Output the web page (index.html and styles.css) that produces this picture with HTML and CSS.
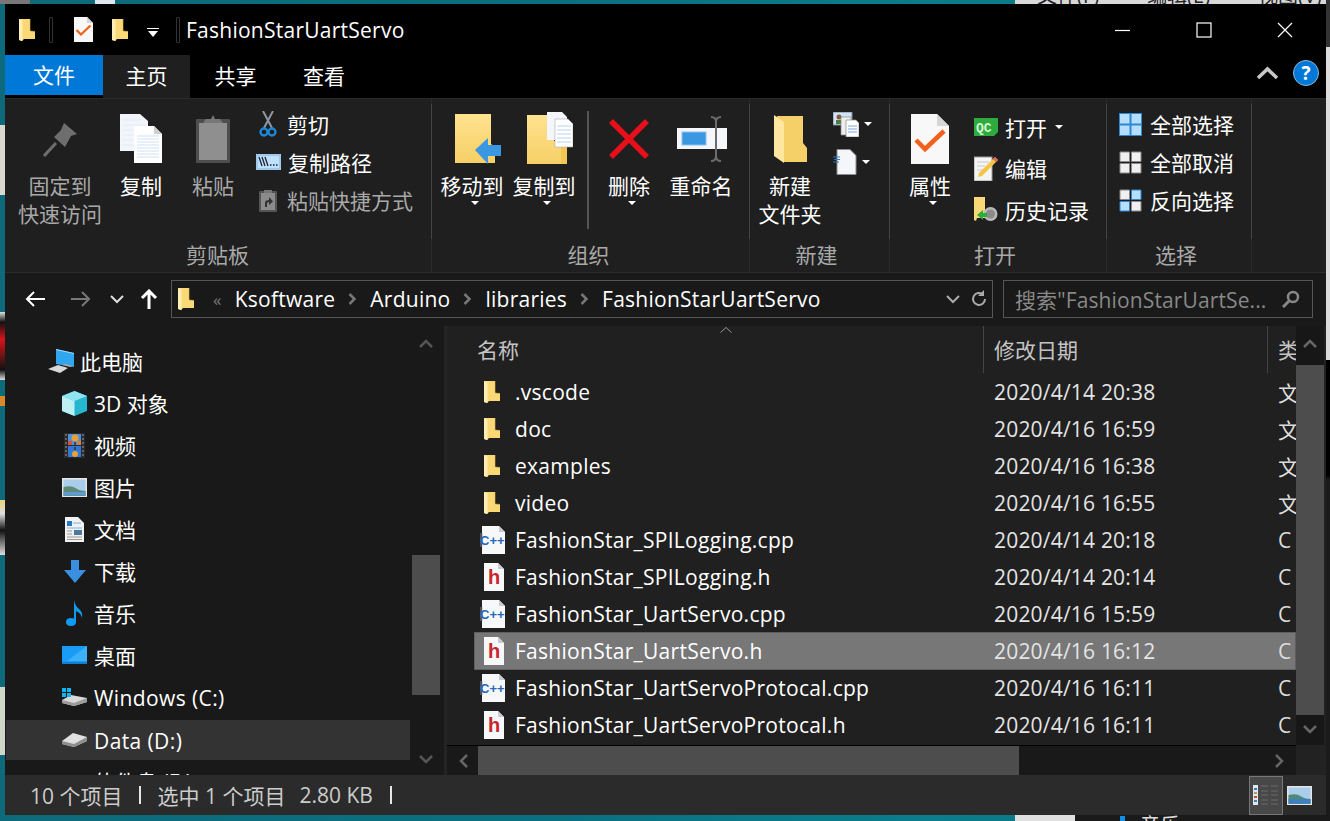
FILE: index.html
```html
<!DOCTYPE html>
<html lang="zh-CN">
<head>
<meta charset="utf-8">
<title>FashionStarUartServo</title>
<link rel="stylesheet" href="styles.css">
</head>
<body>
<svg class="defs" width="0" height="0" aria-hidden="true">
  <defs>
    <linearGradient id="fy" x1="0" y1="0" x2="0" y2="1"><stop offset="0" stop-color="#ffe38f"/><stop offset="1" stop-color="#f6cf66"/></linearGradient>
    <symbol id="folder" viewBox="0 0 16 24"><path d="M0 1h11v12l5 .5V21H5l-2 2-3-1z" fill="#fbd876"/><path d="M0 1l3.500 1.500V23L0 22z" fill="#ffeeb4"/><path d="M11 1v12l5 .5" fill="none" stroke="#e8bd55" stroke-width=".6"/></symbol>
    <symbol id="cpp" viewBox="0 0 28 28"><path d="M2 0h17l6 6v22H2z" fill="#f7f8fa"/><path d="M19 0v6h6z" fill="#c8ccd2"/><rect x="0" y="7" width="2.500" height="14" fill="#777" opacity=".6"/><text x="0" y="19" class="cpptext">C++</text></symbol>
    <symbol id="hdoc" viewBox="0 0 22 28"><path d="M1 0h14l6 6v22H1z" fill="#f7f8fa"/><path d="M15 0v6h6z" fill="#c8ccd2"/><text x="5" y="21" class="htext">h</text></symbol>
    <symbol id="checkdoc" viewBox="0 0 38 50"><path d="M0 0h26l12 12v38H0z" fill="#f8f8f8"/><path d="M26 0v12h12z" fill="#d6d6d6"/><path d="M5 26l9 9L33 17" fill="none" stroke="#f2601d" stroke-width="4.500"/></symbol>
    <symbol id="i-pin" viewBox="0 0 34 34"><path d="M21 0l13 11-6 2-6 11-11-10 7-7z" fill="#6e6e6e"/><path d="M13 20L1 33" stroke="#6e6e6e" stroke-width="3"/></symbol>
    <symbol id="i-copy" viewBox="0 0 42 49"><path d="M0 0h20l8 7v30H0z" fill="#f2f5fb"/><path d="M3 6h18M3 11h22M3 16h22M3 21h22M3 26h22M3 31h22" stroke="#e2e9f5"/><path d="M14 12h20l8 8v29H14z" fill="#fff"/><path d="M34 12v8h8z" fill="#cfcfcf"/><path d="M17 22h22M17 25h22M17 28h22M17 31h22M17 34h22M17 37h22M17 40h22M17 43h22" stroke="#cfdff6"/></symbol>
    <symbol id="i-paste" viewBox="0 0 34 48"><rect y="4" width="34" height="44" rx="1" fill="#4e4e4e"/><rect x="3" y="8" width="28" height="37" fill="#8f8f8f"/><path d="M7 8l3-4h5l2-4 2 4h5l3 4z" fill="#777"/></symbol>
    <symbol id="i-scissors" viewBox="0 0 24 26"><path d="M7 0l9 17M17 0L8 17" stroke="#8d96a3" stroke-width="2" fill="none"/><circle cx="8" cy="21" r="3.500" fill="none" stroke="#1e88d8" stroke-width="2.300"/><circle cx="16" cy="21" r="3.500" fill="none" stroke="#1e88d8" stroke-width="2.300"/></symbol>
    <symbol id="i-path" viewBox="0 0 25 16"><rect width="25" height="16" fill="#bfe1fb"/><rect x="1" y="1" width="23" height="14" fill="none" stroke="#7fb2de"/><path d="M3 3l3 9M6 3l3 9M9 3l3 9" stroke="#223" stroke-width="1.300"/><path d="M14 11h1.500M17 11h1.500M20 11h1.500" stroke="#223" stroke-width="1.300"/></symbol>
    <symbol id="i-shortcut" viewBox="0 0 18 23"><rect y="2" width="18" height="21" rx="1" fill="#555"/><rect x="2" y="4" width="14" height="17" fill="#8b8b8b"/><path d="M5 1h8v3H5z" fill="#777"/><path d="M6 18v-4q0-3 4-3V8l4 4.500L10 16v-3q-2 0-2 2v3z" fill="#333"/></symbol>
    <symbol id="i-move" viewBox="0 0 46 51"><path d="M0 1h36v30l4 3v16H0z" fill="url(#fy)"/><path d="M20 37L33 25v7h13v11H33v8z" fill="#3a97e2"/></symbol>
    <symbol id="i-copyto" viewBox="0 0 46 53"><path d="M0 3h27v26h13v23H0z" fill="url(#fy)"/><path d="M34 30l6 4v18h-6z" fill="#f2c653"/><path d="M20 0h15l5 5v23H20z" fill="#f4f6fa"/><path d="M28 7h13l5 5v23H28z" fill="#fff" stroke="#aab" stroke-width=".6"/><path d="M30 14h14M30 18h14M30 22h14M30 26h14M30 30h14" stroke="#bcd2f0"/></symbol>
    <symbol id="i-x" viewBox="0 0 40 40"><path d="M2 2l36 36M38 2L2 38" stroke="#e60f1a" stroke-width="5.500" fill="none"/></symbol>
    <symbol id="i-rename" viewBox="0 0 50 46"><rect y="12" width="50" height="21" fill="#f4f6f9"/><rect x="5" y="16" width="24" height="13" fill="#3a97e2" stroke="#8cc1ea"/><path d="M34 1q5 0 5 5v34q0 5-5 5M44 1q-5 0-5 5v34q0 5 5 5" fill="none" stroke="#6b6b6b" stroke-width="2"/></symbol>
    <symbol id="i-newfolder" viewBox="0 0 33 48"><path d="M3 1h26v27l4 5v14H10z" fill="#f5cf68"/><path d="M0 0l10 7v41L0 41z" fill="#ffe7a0"/></symbol>
    <symbol id="i-contact" viewBox="0 0 26 25"><rect width="19" height="13" fill="#cfe4f6" stroke="#7a8a99"/><circle cx="6" cy="5" r="2.500" fill="#8b5a3c"/><rect x="3" y="8" width="6" height="4" fill="#4e7a3a"/><path d="M8 5h10l0 18H8z" fill="#eee" stroke="#888" stroke-width=".7"/><path d="M13 8h10l3 3v14H13z" fill="#fff" stroke="#888" stroke-width=".7"/><path d="M15 14h9M15 17h9M15 20h9" stroke="#7da7dd"/></symbol>
    <symbol id="i-newdoc" viewBox="0 0 24 26"><path d="M4 .5h13l6 6v19H4z" fill="#f4f6f9" stroke="#8c8c8c"/><path d="M0 8h7M1 10.500h6M0 13h6" stroke="#2d78c4" stroke-width="1.200"/></symbol>
    <symbol id="i-qc" viewBox="0 0 24 18"><path d="M0 0h24v14l-4 4H0z" fill="#2dab3c"/><text x="2" y="13.500" class="qctext">QC</text></symbol>
    <symbol id="i-edit" viewBox="0 0 24 25"><rect x="0" y="1" width="18" height="24" fill="#f4f4f4" stroke="#9a9a9a"/><path d="M3 6h12M3 10h8M3 14h6" stroke="#c8c8c8"/><path d="M21 1l3 3L8 20l-4 1 1-4z" fill="#f6c445"/><path d="M21 1l3 3-2 2-3-3z" fill="#e85d5d"/></symbol>
    <symbol id="i-history" viewBox="0 0 24 25"><path d="M0 0h11v14h4v7H3l-1 3-2-1z" fill="#fbd876"/><circle cx="16.500" cy="17" r="7" fill="#b9b9b9"/><circle cx="16.500" cy="17" r="4.500" fill="#8a8a8a"/><path d="M3 18l6-5v3h4v4H9v3z" fill="#2faa3c"/></symbol>
    <symbol id="i-selall" viewBox="0 0 23 23"><rect width="23" height="23" fill="#2f87cf"/><path d="M1 1h9.500v9.500H1zM12.500 1H22v9.500h-9.500zM1 12.500h9.500V22H1zM12.500 12.500H22V22h-9.500z" fill="#b5deff"/></symbol>
    <symbol id="i-selnone" viewBox="0 0 23 23"><path d="M1 1h9.500v9.500H1zM12.500 1H22v9.500h-9.500zM1 12.500h9.500V22H1zM12.500 12.500H22V22h-9.500z" fill="#f0f0f0" stroke="#8a8a8a"/></symbol>
    <symbol id="i-selinv" viewBox="0 0 23 23"><path d="M1 1h9.500v9.500H1zM12.500 12.500H22V22h-9.500z" fill="#f0f0f0" stroke="#8a8a8a"/><path d="M12.500 1H22v9.500h-9.500zM1 12.500h9.500V22H1z" fill="#b5deff" stroke="#2f87cf"/></symbol>
    <symbol id="n-pc" viewBox="0 0 27 25"><path d="M8 0l18 4v14L8 15z" fill="#2fa6ee"/><path d="M8 0l18 4v1L8 1z" fill="#a8d8f5"/><path d="M0 20l10-4 10 3-8 5z" fill="#d8d8d8"/><path d="M14 16l8 2 3-1-8-2z" fill="#aaa"/></symbol>
    <symbol id="n-3d" viewBox="0 0 25 25"><path d="M12.500 0L25 5v15l-12.500 5L0 20V5z" fill="#27b6cf"/><path d="M12.500 0L25 5l-12.500 5L0 5z" fill="#8fe4ef"/><path d="M0 5l12.500 5v15L0 20z" fill="#bdf0f5"/></symbol>
    <symbol id="n-video" viewBox="0 0 21 25"><rect width="21" height="25" fill="#2b2b2b"/><path d="M1 2h2M1 6h2M1 10h2M1 14h2M1 18h2M1 22h2M18 2h2M18 6h2M18 10h2M18 14h2M18 18h2M18 22h2" stroke="#777" stroke-width="1.500"/><rect x="4" y="1" width="13" height="11" fill="#4a8fe0"/><rect x="4" y="13" width="13" height="11" fill="#2f78d8"/><rect x="4" y="8" width="4" height="4" fill="#d9503c"/><rect x="13" y="8" width="4" height="4" fill="#d9803c"/><circle cx="11" cy="5" r="3.500" fill="#e8a030"/><path d="M11 9v3M11 14v3" stroke="#333" stroke-width="1.500"/><circle cx="11" cy="21" r="3" fill="#e8a030"/></symbol>
    <symbol id="n-pic" viewBox="0 0 25 19"><rect width="25" height="19" fill="#e6e6e6"/><rect x="1.500" y="1.500" width="22" height="16" fill="#a9cdea"/><path d="M1.500 9q8-2 12 1t10 3v5h-22z" fill="#5f8a78"/><rect x="1.500" y="14" width="22" height="3.500" fill="#5d9bd3"/></symbol>
    <symbol id="n-doc" viewBox="0 0 19 25"><path d="M0 0h13l6 6v19H0z" fill="#f2f2f2"/><path d="M2 4h5v5H2z" fill="#2a78c4"/><path d="M8 6h8M2 11h15" stroke="#7fb2de"/><rect x="9" y="13" width="8" height="5" fill="#4a7aa0"/><path d="M2 14h5M2 17h5M2 20h15M2 22.500h15" stroke="#999"/></symbol>
    <symbol id="n-down" viewBox="0 0 22 23"><path d="M7 0h8v10h7L11 23 0 10h7z" fill="#3a8fe0"/></symbol>
    <symbol id="n-music" viewBox="0 0 18 26"><path d="M8 0q1 6 5 9t3 9q-1-5-6-7v11q0 4-5 4T0 22q0-4 5-4 1.500 0 3 .6z" fill="#0f9cf0"/></symbol>
    <symbol id="n-desk" viewBox="0 0 25 18"><rect width="25" height="18" fill="#1a9bf5"/><path d="M25 0v15H5z" fill="#3db0fa"/><rect y="16" width="25" height="2" fill="#0f7fd0"/></symbol>
    <symbol id="n-c" viewBox="0 0 25 18"><path d="M0 12l9-5 16 3v4l-13 4-12-3z" fill="#d8d8d8"/><path d="M0 12l12 3 13-5v4l-13 4-12-3z" fill="#9a9a9a"/><path d="M0 0h4v4H0zM5 0h4v4H5zM0 5h4v4H0zM5 5h4v4H5z" fill="#13b5f0"/></symbol>
    <symbol id="n-d" viewBox="0 0 25 14"><path d="M0 8l11-8 14 4v4l-13 6-12-3z" fill="#e0e0e0"/><path d="M0 8l12 3 13-7v4l-13 6-12-3z" fill="#8e8e8e"/></symbol>
    <symbol id="tile" viewBox="0 0 25 19"><rect width="25" height="19" fill="#e6e6e6"/><rect x="1.500" y="1.500" width="22" height="16" fill="#a9cdea"/><path d="M1.500 9q8-2 12 1t10 3v5h-22z" fill="#4f8a78"/><rect x="1.500" y="13" width="22" height="4.500" fill="#3f80c4"/></symbol>
    <symbol id="details" viewBox="0 0 26 24"><rect x="0" y="2" width="5" height="20" fill="#dfe6ee"/><path d="M1 5h3v2H1z" fill="#3a78b8"/><path d="M1 9h3v2H1z" fill="#a8a050"/><path d="M1 13h3v2H1z" fill="#b8503a"/><path d="M1 17h3v2H1z" fill="#3a88b8"/><path d="M8 3h7M18 3h7M8 8h7M18 8h7M8 12h7M18 12h7M8 17h7M18 17h7M8 21h7M18 21h7" stroke="#6a6a6a"/></symbol>
    <symbol id="crumb" viewBox="0 0 9 12"><path d="M1.500 1l5 5-5 5" fill="none" stroke="#777" stroke-width="2.500"/></symbol>
  </defs>
</svg>

<div class="desktop">
  <div class="bit bit-a"></div><div class="bit bit-b"></div><div class="bit bit-c"></div><div class="bit bit-d"></div><div class="bit bit-e"></div><div class="bit bit-f"></div><div class="bit bit-g"></div>
  <div class="bit bit-h"><span>文件(F)</span><span>编辑(E)</span><span>视图(V)</span><span>帮助</span></div>
  <div class="bit bit-i"></div><div class="bit bit-j"></div>
  <div class="bit bit-k"><span>音乐</span></div>

  <main class="window">
    <header class="titlebar">
      <svg class="q1" width="16" height="24"><use href="#folder"/></svg>
      <span class="qsep"></span>
      <svg class="q2" width="19" height="25"><use href="#checkdoc"/></svg>
      <svg class="q3" width="16" height="24"><use href="#folder"/></svg>
      <svg class="q4" width="12" height="9" viewBox="0 0 12 9"><path d="M0 .5h12" stroke="#fff"/><path d="M1 3h10L6 9z" fill="#fff"/></svg>
      <span class="qsep q5"></span>
      <span class="wintitle">FashionStarUartServo</span>
      <div class="winbtns">
        <svg width="16" height="16" viewBox="0 0 16 16"><path d="M0 8.500h15" stroke="#fff" stroke-width="1.200"/></svg>
        <svg width="16" height="16" viewBox="0 0 16 16"><rect x="1" y="1" width="14" height="14" fill="none" stroke="#fff" stroke-width="1.200"/></svg>
        <svg width="16" height="16" viewBox="0 0 16 16"><path d="M1 1l14 14M15 1L1 15" stroke="#fff" stroke-width="1.200"/></svg>
      </div>
    </header>

    <nav class="tabs">
      <span class="tab tab-file">文件</span>
      <span class="tab tab-on">主页</span>
      <span class="tab tab-w1">共享</span>
      <span class="tab tab-w2">查看</span>
      <div class="tabs-end">
        <svg width="23" height="14" viewBox="0 0 23 14"><path d="M2 12l9.500-9 9.500 9" fill="none" stroke="#c8c8c8" stroke-width="3.500"/></svg>
        <span class="help">?</span>
      </div>
    </nav>

    <section class="ribbon">
      <div class="group g1">
        <div class="gbody">
          <div class="big off w88"><div class="bi"><svg class="mt-pin" width="34" height="34"><use href="#i-pin"/></svg></div><span>固定到<br>快速访问</span></div>
          <div class="big w74"><div class="bi"><svg width="42" height="49"><use href="#i-copy"/></svg></div><span>复制</span></div>
          <div class="big off w70"><div class="bi"><svg width="34" height="48"><use href="#i-paste"/></svg></div><span>粘贴</span></div>
          <div class="smalls s1">
            <div class="sm"><svg width="24" height="26"><use href="#i-scissors"/></svg><span>剪切</span></div>
            <div class="sm"><svg width="25" height="16"><use href="#i-path"/></svg><span>复制路径</span></div>
            <div class="sm off"><svg width="24" height="23"><use href="#i-shortcut"/></svg><span>粘贴快捷方式</span></div>
          </div>
        </div>
        <div class="glabel">剪贴板</div>
      </div>
      <div class="group g2">
        <div class="gbody">
          <div class="big w72 first"><div class="bi"><svg class="shift6" width="46" height="51"><use href="#i-move"/></svg></div><span>移动到</span><i class="tri"></i></div>
          <div class="big w72"><div class="bi"><svg class="shift6" width="46" height="53"><use href="#i-copyto"/></svg></div><span>复制到</span><i class="tri"></i></div>
          <span class="vsep"></span>
          <div class="big w80"><div class="bi"><svg width="40" height="40"><use href="#i-x"/></svg></div><span>删除</span><i class="tri"></i></div>
          <div class="big w64"><div class="bi"><svg class="shift2" width="50" height="46"><use href="#i-rename"/></svg></div><span>重命名</span></div>
        </div>
        <div class="glabel">组织</div>
      </div>
      <div class="group g3">
        <div class="gbody">
          <div class="big w80"><div class="bi"><svg width="33" height="48"><use href="#i-newfolder"/></svg></div><span>新建<br>文件夹</span></div>
          <div class="smalls s3">
            <div class="sm"><svg width="26" height="25"><use href="#i-contact"/></svg><i class="tri inl"></i></div>
            <div class="sm"><svg width="24" height="26"><use href="#i-newdoc"/></svg><i class="tri inl"></i></div>
          </div>
        </div>
        <div class="glabel">新建</div>
      </div>
      <div class="group g4">
        <div class="gbody">
          <div class="big w80"><div class="bi"><svg width="38" height="50"><use href="#checkdoc"/></svg></div><span>属性</span><i class="tri"></i></div>
          <div class="smalls s4">
            <div class="sm"><svg width="24" height="18"><use href="#i-qc"/></svg><span>打开</span><i class="tri inl near"></i></div>
            <div class="sm"><svg width="24" height="25"><use href="#i-edit"/></svg><span>编辑</span></div>
            <div class="sm"><svg width="24" height="25"><use href="#i-history"/></svg><span>历史记录</span></div>
          </div>
        </div>
        <div class="glabel">打开</div>
      </div>
      <div class="group g5">
        <div class="gbody">
          <div class="smalls s5">
            <div class="sm"><svg width="23" height="23"><use href="#i-selall"/></svg><span>全部选择</span></div>
            <div class="sm"><svg width="23" height="23"><use href="#i-selnone"/></svg><span>全部取消</span></div>
            <div class="sm"><svg width="23" height="23"><use href="#i-selinv"/></svg><span>反向选择</span></div>
          </div>
        </div>
        <div class="glabel">选择</div>
      </div>
    </section>

    <div class="addrrow">
      <svg class="a-back" width="20" height="16" viewBox="0 0 20 16"><path d="M20 8H2M9 1L2 8l7 7" fill="none" stroke="#fff" stroke-width="2"/></svg>
      <svg class="a-fwd" width="20" height="16" viewBox="0 0 20 16"><path d="M0 8h18M11 1l7 7-7 7" fill="none" stroke="#777" stroke-width="2"/></svg>
      <svg class="a-down" width="14" height="9" viewBox="0 0 14 9"><path d="M1 1l6 6 6-6" fill="none" stroke="#ddd" stroke-width="2"/></svg>
      <svg class="a-up" width="18" height="20" viewBox="0 0 18 20"><path d="M9 20V3M2 9l7-7 7 7" fill="none" stroke="#fff" stroke-width="3"/></svg>
      <div class="addr">
        <svg width="16" height="24"><use href="#folder"/></svg>
        <span class="crumb-more">«</span>
        <span>Ksoftware</span><svg class="cs" width="9" height="12"><use href="#crumb"/></svg>
        <span>Arduino</span><svg class="cs" width="9" height="12"><use href="#crumb"/></svg>
        <span>libraries</span><svg class="cs" width="9" height="12"><use href="#crumb"/></svg>
        <span>FashionStarUartServo</span>
        <div class="addr-end">
          <svg width="14" height="9" viewBox="0 0 14 9"><path d="M1 1l6 6 6-6" fill="none" stroke="#aaa" stroke-width="2"/></svg>
          <svg width="18" height="18" viewBox="0 0 18 18"><path d="M15 9a6 6 0 1 1-2-4.500" fill="none" stroke="#aaa" stroke-width="2"/><path d="M14 0v6H8z" fill="#aaa"/></svg>
        </div>
      </div>
      <div class="search">
        <span>搜索"FashionStarUartSe...</span>
        <svg width="18" height="18" viewBox="0 0 18 18"><circle cx="11" cy="7" r="5" fill="none" stroke="#888" stroke-width="2.500"/><path d="M7 11l-6 6" stroke="#888" stroke-width="3"/></svg>
      </div>
    </div>

    <div class="panes">
      <aside class="nav">
        <div class="navlist">
          <div class="ni lvl0"><svg width="27" height="25"><use href="#n-pc"/></svg><span>此电脑</span></div>
          <div class="ni"><span class="nic"><svg width="25" height="25"><use href="#n-3d"/></svg></span><span>3D 对象</span></div>
          <div class="ni"><span class="nic"><svg width="21" height="25"><use href="#n-video"/></svg></span><span>视频</span></div>
          <div class="ni"><span class="nic"><svg width="25" height="19"><use href="#n-pic"/></svg></span><span>图片</span></div>
          <div class="ni"><span class="nic"><svg width="19" height="25"><use href="#n-doc"/></svg></span><span>文档</span></div>
          <div class="ni"><span class="nic"><svg width="22" height="23"><use href="#n-down"/></svg></span><span>下载</span></div>
          <div class="ni"><span class="nic"><svg width="18" height="26"><use href="#n-music"/></svg></span><span>音乐</span></div>
          <div class="ni"><span class="nic"><svg width="25" height="18"><use href="#n-desk"/></svg></span><span>桌面</span></div>
          <div class="ni latin"><span class="nic"><svg width="25" height="18"><use href="#n-c"/></svg></span><span class="nt-l">Windows (C:)</span></div>
          <div class="ni ni-sel latin"><span class="nic"><svg width="25" height="14"><use href="#n-d"/></svg></span><span class="nt-l">Data (D:)</span></div>
          <div class="ni"><span class="nic"></span><span>软件盘 (E:)</span></div>
        </div>
        <div class="vbar navbar">
          <svg class="ar" width="14" height="9" viewBox="0 0 14 9"><path d="M1 8l6-6 6 6" fill="none" stroke="#555" stroke-width="2.500"/></svg>
          <div class="vthumb nt"></div>
          <svg class="ar ar-end" width="14" height="9" viewBox="0 0 14 9"><path d="M1 1l6 6 6-6" fill="none" stroke="#555" stroke-width="2.500"/></svg>
        </div>
      </aside>
      <span class="split"></span>
      <section class="files">
        <div class="filemain">
          <div class="listwrap">
            <div class="head">
              <svg class="sortcaret" width="12" height="6" viewBox="0 0 12 6"><path d="M.5 5.500L6 .5l5.500 5" fill="none" stroke="#999"/></svg>
              <span class="hc hc1">名称</span><span class="hc hc2">修改日期</span><span class="hc hc3">类</span>
            </div>
            <div class="row"><span class="ri ri-f"><svg width="16" height="24"><use href="#folder"/></svg></span><span class="rn">.vscode</span><span class="rd">2020/4/14 20:38</span><span class="rt">文</span></div>
            <div class="row"><span class="ri ri-f"><svg width="16" height="24"><use href="#folder"/></svg></span><span class="rn">doc</span><span class="rd">2020/4/16 16:59</span><span class="rt">文</span></div>
            <div class="row"><span class="ri ri-f"><svg width="16" height="24"><use href="#folder"/></svg></span><span class="rn">examples</span><span class="rd">2020/4/16 16:38</span><span class="rt">文</span></div>
            <div class="row"><span class="ri ri-f"><svg width="16" height="24"><use href="#folder"/></svg></span><span class="rn">video</span><span class="rd">2020/4/16 16:55</span><span class="rt">文</span></div>
            <div class="row"><span class="ri"><svg width="28" height="28"><use href="#cpp"/></svg></span><span class="rn">FashionStar_SPILogging.cpp</span><span class="rd">2020/4/14 20:18</span><span class="rt">C</span></div>
            <div class="row"><span class="ri"><svg width="22" height="28"><use href="#hdoc"/></svg></span><span class="rn">FashionStar_SPILogging.h</span><span class="rd">2020/4/14 20:14</span><span class="rt">C</span></div>
            <div class="row"><span class="ri"><svg width="28" height="28"><use href="#cpp"/></svg></span><span class="rn">FashionStar_UartServo.cpp</span><span class="rd">2020/4/16 15:59</span><span class="rt">C</span></div>
            <div class="row row-sel"><span class="ri"><svg width="22" height="28"><use href="#hdoc"/></svg></span><span class="rn">FashionStar_UartServo.h</span><span class="rd">2020/4/16 16:12</span><span class="rt">C</span></div>
            <div class="row"><span class="ri"><svg width="28" height="28"><use href="#cpp"/></svg></span><span class="rn">FashionStar_UartServoProtocal.cpp</span><span class="rd">2020/4/16 16:11</span><span class="rt">C</span></div>
            <div class="row"><span class="ri"><svg width="22" height="28"><use href="#hdoc"/></svg></span><span class="rn">FashionStar_UartServoProtocal.h</span><span class="rd">2020/4/16 16:11</span><span class="rt">C</span></div>
          </div>
          <div class="vbar listbar">
            <svg class="ar" width="14" height="9" viewBox="0 0 14 9"><path d="M1 8l6-6 6 6" fill="none" stroke="#666" stroke-width="2.500"/></svg>
            <div class="vthumb lt"></div>
            <svg class="ar ar-end" width="14" height="9" viewBox="0 0 14 9"><path d="M1 1l6 6 6-6" fill="none" stroke="#666" stroke-width="2.500"/></svg>
          </div>
        </div>
        <div class="hbar">
          <svg class="har" width="9" height="14" viewBox="0 0 9 14"><path d="M8 1L2 7l6 6" fill="none" stroke="#666" stroke-width="2.500"/></svg>
          <div class="hthumb"></div>
          <svg class="har har-end" width="9" height="14" viewBox="0 0 9 14"><path d="M1 1l6 6-6 6" fill="none" stroke="#666" stroke-width="2.500"/></svg>
          <div class="hcorner"></div>
        </div>
      </section>
    </div>

    <footer class="status">
      <span class="st1">10 个项目</span><i class="bar"></i><span>选中 1 个项目</span><span class="st3">2.80 KB</span><i class="bar"></i>
      <div class="views">
        <span class="view-on"><svg width="26" height="24"><use href="#details"/></svg></span>
        <svg width="25" height="19"><use href="#tile"/></svg>
      </div>
    </footer>
  </main>
</div>
</body>
</html>
```

FILE: styles.css
```css
* { box-sizing: border-box; }
html, body { margin: 0; padding: 0; width: 1330px; height: 821px; overflow: hidden; }
body { font-family: "Open Sans", "Noto Sans CJK SC", sans-serif; font-size: 21px; color: #fff; }
.defs { position: absolute; }
svg { display: block; flex: none; }
.cpptext { font: 700 13px "Liberation Sans", sans-serif; fill: #2468b8; }
.htext { font: 700 20px "Liberation Sans", sans-serif; fill: #c8252c; }
.qctext { font: 700 13px "Liberation Mono", monospace; fill: #d6f5d6; }

.desktop { position: relative; width: 1330px; height: 821px; overflow: hidden; background: linear-gradient(90deg, #0d6a7a 0, #0a6f80 40%, #0b7d8c 70%, #0b6d7c 100%); }
.bit { position: absolute; overflow: hidden; }
.bit-a { left: 0; top: 0; width: 30px; height: 4px; background: #777; }
.bit-b { left: 95px; top: 0; width: 20px; height: 4px; background: #dfe6ee; }
.bit-c { left: 0; top: 125px; width: 5px; height: 70px; background: #d8d8d0; }
.bit-d { left: 0; top: 312px; width: 5px; height: 68px; background: linear-gradient(#ddd, #111 15%, #d8141c 40%, #111 85%, #ddd); }
.bit-e { left: 0; top: 396px; width: 5px; height: 10px; background: #d8882a; }
.bit-f { left: 0; top: 500px; width: 5px; height: 55px; background: linear-gradient(#e8d27a, #ddd 25%, #111 55%, #ddd); }
.bit-g { left: 0; top: 687px; width: 5px; height: 68px; background: #cfd8c8; }
.bit-h { left: 1015px; top: 0; width: 315px; height: 4px; background: #d8d8d8; color: #222; font-size: 20px; line-height: 20px; white-space: nowrap; display: flex; gap: 48px; padding-left: 22px; align-items: flex-end; }
.bit-h span { flex: none; margin-bottom: -2px; }
.bit-i { left: 1326px; top: 0; width: 4px; height: 360px; background: linear-gradient(#333 0, #333 47px, #dcdcdc 47px); }
.bit-j { left: 1326px; top: 360px; width: 4px; height: 461px; background: linear-gradient(#000 0, #000 25%, #1b1b1b 26%); }
.bit-k { left: 1015px; top: 815px; width: 315px; height: 6px; background: linear-gradient(90deg, #e0e0e0 0, #e0e0e0 19%, #1a1a1a 19%); color: #ddd; font-size: 20px; line-height: 20px; padding: 1px 0 0 125px; }
.bit-k::before { content: ""; position: absolute; left: 105px; top: 1px; width: 5px; height: 5px; background: #0f8fe8; }

.window { position: absolute; left: 5px; top: 4px; width: 1321px; height: 811px; display: flex; flex-direction: column; background: #191919; }

.titlebar { height: 51px; background: #000; display: flex; align-items: center; flex: none; }
.q1 { margin-left: 14px; }
.qsep { width: 4px; height: 26px; border: 1px solid #333; border-radius: 1px; margin-left: 14px; }
.q2 { margin-left: 21px; }
.q3 { margin-left: 19px; }
.q4 { margin-left: 19px; margin-top: 6px; }
.q5 { margin-left: 17px; }
.wintitle { margin-left: 6px; font-size: 21px; letter-spacing: .25px; }
.winbtns { margin-left: auto; display: flex; gap: 65px; padding-right: 33px; }

.tabs { height: 43px; background: #000; display: flex; align-items: flex-start; flex: none; position: relative; }
.tab { height: 43px; line-height: 42px; text-align: center; }
.tab-file { width: 98px; height: 40px; line-height: 40px; background: #0078d7; }
.tab-on { width: 87px; background: #1f1f1f; }
.tab-w1 { width: 91px; }
.tab-w2 { width: 86px; }
.tabs-end { margin-left: auto; display: flex; align-items: center; gap: 14px; padding: 5px 7px 0 0; }
.help { width: 26px; height: 26px; border-radius: 50%; background: #0078d7; border: 1px solid #8fb8dc; font: 700 19px/24px "Open Sans", sans-serif; text-align: center; }

.ribbon { height: 175px; background: #1f1f1f; border-top: 1px solid #2a2a2a; border-bottom: 1px solid #2c2c2c; display: flex; flex: none; }
.group { display: flex; flex-direction: column; border-right: 1px solid #2b2b2b; position: relative; }
.group::after { content: ""; position: absolute; right: -1px; top: 5px; height: 135px; width: 1px; background: #444; }
.g1 { width: 427px; padding-left: 11px; }
.g2 { width: 318px; }
.g3 { width: 140px; }
.g4 { width: 217px; }
.g5 { width: 145px; }
.gbody { height: 140px; display: flex; padding-top: 6px; }
.glabel { height: 33px; line-height: 32px; text-align: center; color: #a9a9a9; padding-right: 6px; }
.g1 .glabel { padding-right: 12px; }
.g2 .glabel { padding-right: 4px; }

.big { display: flex; flex-direction: column; align-items: center; text-align: center; line-height: 28px; flex: none; position: relative; }
.bi { height: 67px; display: flex; align-items: center; justify-content: center; }
.off { color: #a8a8a8; }
.w88 { width: 88px; }
.w74 { width: 74px; }
.w70 { width: 70px; }
.w72 { width: 72px; }
.w64 { width: 64px; }
.w80 { width: 80px; }
.first { margin-left: 4px; }
.mt-pin { margin-top: 2px; }
.shift6 { margin-left: 12px; }
.shift2 { margin-left: 2px; }
.tri { display: block; width: 0; height: 0; border-left: 4px solid transparent; border-right: 4px solid transparent; border-top: 4px solid #fff; margin: 1px 0 0 6px; }
.tri.inl { margin: 0 0 0 5px; }
.tri.near { margin: 0 0 0 1px; }
.vsep { width: 2px; height: 118px; background: #555; margin: 6px 0 0 7px; flex: none; }

.smalls { display: flex; flex-direction: column; }
.sm { display: flex; align-items: center; height: 38px; gap: 7px; }
.s1 { margin-left: 8px; }
.s3 { margin-left: 3px; }
.s3 .sm { gap: 0; }
.s4 { margin-left: 4px; padding-top: 1px; }
.s4 .sm { height: 41.500px; }
.s5 { margin-left: 12px; }
.s5 .sm { gap: 8px; }

.addrrow { height: 53px; background: #191919; display: flex; align-items: center; flex: none; padding-bottom: 1px; }
.a-back { margin-left: 20px; }
.a-fwd { margin-left: 26px; }
.a-down { margin-left: 19px; }
.a-up { margin-left: 16px; }
.addr { margin-left: 13px; width: 822px; height: 38px; border: 1px solid #555; display: flex; align-items: center; padding-left: 6px; letter-spacing: .25px; }
.crumb-more { color: #777; margin: 0 13px 0 19px; font-size: 17px; }
.cs { margin: 0 13px; }
.addr-end { margin-left: auto; display: flex; align-items: center; gap: 10px; padding-right: 4px; }
.search { margin-left: 10px; width: 310px; height: 38px; border: 1px solid #555; display: flex; align-items: center; justify-content: space-between; padding: 0 12px 0 11px; color: #888; letter-spacing: .12px; }

.panes { flex: 1; display: flex; min-height: 0; }
.nav { width: 436px; display: flex; background: #191919; flex: none; overflow: hidden; }
.navlist { width: 407px; padding-top: 14px; overflow: hidden; flex: none; }
.ni { height: 42px; display: flex; align-items: center; padding-left: 57px; gap: 7px; white-space: nowrap; }
.latin { letter-spacing: .4px; }
.nt-l { padding-top: 2px; }
.ni-sel { background: #333; height: 40px; margin: 2px 2px 0 1px; padding-left: 56px; }
.lvl0 { padding-left: 43px; gap: 5px; }
.nic { width: 25px; display: flex; justify-content: center; }
.vbar { width: 28px; display: flex; flex-direction: column; align-items: center; flex: none; background: #191919; position: relative; }
.ar { margin-top: 13px; }
.ar-end { position: absolute; bottom: 11px; margin: 0; }
.vthumb { position: absolute; left: 0; width: 100%; background: #4d4d4d; }
.nt { top: 229px; height: 140px; }
.lt { top: 39px; height: 350px; }
.navbar { margin-left: 0; width: 28px; }
.split { width: 6px; background: linear-gradient(90deg, #191919 50%, #242424 50%); flex: none; }

.files { flex: 1; display: flex; flex-direction: column; min-width: 0; background: #202020; }
.filemain { flex: 1; display: flex; min-height: 0; }
.listwrap { flex: 1; min-width: 0; overflow: hidden; background: #202020; }
.head { height: 47px; display: flex; position: relative; color: #c4c4c4; }
.hc { line-height: 48px; padding-left: 10px; border-right: 1px solid #444; white-space: nowrap; overflow: hidden; }
.hc1 { width: 537px; padding-left: 30px; }
.hc2 { width: 284px; }
.hc3 { flex: 1; border-right: 0; }
.sortcaret { position: absolute; left: 273px; top: 1px; }
.row { height: 37px; margin-left: 27px; display: grid; grid-template-columns: 41px 479px 284px 1fr; align-items: center; white-space: nowrap; overflow: hidden; }
.ri { display: flex; justify-content: center; width: 40px; }
.ri-f { width: 36px; }
.rn { letter-spacing: .28px; }
.rd { color: #e4e4e4; letter-spacing: .2px; }
.rt { color: #ddd; overflow: hidden; }
.row-sel { background: #777; box-shadow: inset 0 0 0 1px #5f5f5f; height: 38px; margin-bottom: -1px; }
.listbar { width: 30px; background: #171717; border-right: 2px solid #222; }
.listbar .lt { width: 28px; }

.hbar { height: 30px; display: flex; align-items: center; background: #191919; position: relative; flex: none; border-top: 1px solid #000; }
.hthumb { position: absolute; left: 31px; top: 0; bottom: 0; width: 541px; background: #4d4d4d; }
.har { position: absolute; left: 12px; top: 8px; }
.har-end { left: 828px; }
.hcorner { position: absolute; right: 0; top: -1px; bottom: 0; width: 30px; background: #222; }

.status { height: 40px; background: #2b2b2b; color: #ccc; display: flex; align-items: center; padding-left: 25px; flex: none; }
.bar { width: 2px; height: 18px; background: #e6e6e6; margin: 0 16px 0 17px; }
.st3 { margin-left: 14px; }
.views { margin-left: auto; display: flex; align-items: center; padding-right: 14px; gap: 4px; }
.view-on { width: 34px; height: 39px; border: 1px solid #777; background: #484848; display: flex; align-items: center; justify-content: center; }
```
